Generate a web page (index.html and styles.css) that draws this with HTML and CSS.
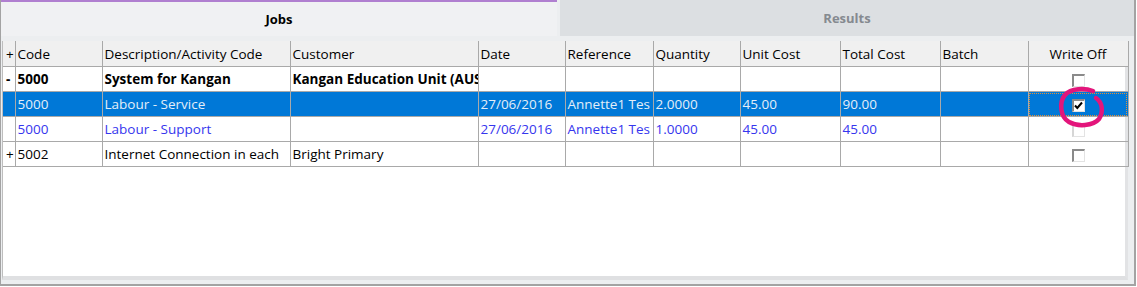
FILE: index.html
```html
<!DOCTYPE html>
<html lang="en">
<head>
  <meta charset="UTF-8" />
  <title>Jobs</title>
  <link rel="stylesheet" href="styles.css">
</head>
<body>
  <div class="window">
    <div class="tabs">
      <div class="tab active">Jobs</div>
      <div class="tab">Results</div>
    </div>

    <div class="panel">
      <table class="grid">
        <colgroup>
          <col style="width:12px"><col style="width:87px"><col style="width:188px"><col style="width:188px">
          <col style="width:87px"><col style="width:88px"><col style="width:87px"><col style="width:100px">
          <col style="width:100px"><col style="width:88px"><col style="width:100px">
        </colgroup>
        <thead>
          <tr>
            <th class="exp">+</th>
            <th>Code</th>
            <th>Description/Activity Code</th>
            <th>Customer</th>
            <th>Date</th>
            <th>Reference</th>
            <th>Quantity</th>
            <th>Unit Cost</th>
            <th>Total Cost</th>
            <th>Batch</th>
            <th class="center">Write Off</th>
          </tr>
        </thead>
        <tbody>
          <tr class="parent">
            <td class="exp">-</td>
            <td>5000</td>
            <td>System for Kangan</td>
            <td>Kangan Education Unit (AUS</td>
            <td></td><td></td><td></td><td></td><td></td><td></td>
            <td class="center"><span class="check"></span></td>
          </tr>
          <tr class="selected">
            <td class="exp"></td>
            <td>5000</td>
            <td>Labour - Service</td>
            <td></td>
            <td>27/06/2016</td>
            <td>Annette1 Tes</td>
            <td>2.0000</td>
            <td>45.00</td>
            <td>90.00</td>
            <td></td>
            <td class="center focus">
              <span class="check on">
                <svg width="11" height="11" viewBox="0 0 11 11"><path d="M2 5.5 L4.3 8 L9 2.5" fill="none" stroke="#000" stroke-width="2"/></svg>
              </span>
              <svg class="ring" width="50" height="46" viewBox="0 0 50 46">
                <path d="M37 6 C29 3 15 3 9 10 C3 17 4 32 13 37 C22 42 37 41 43 34 C48 26 46 17 40 13" fill="none" stroke="#e3157b" stroke-width="4.5" stroke-linecap="round"/>
              </svg>
            </td>
          </tr>
          <tr class="child">
            <td class="exp"></td>
            <td>5000</td>
            <td>Labour - Support</td>
            <td></td>
            <td>27/06/2016</td>
            <td>Annette1 Tes</td>
            <td>1.0000</td>
            <td>45.00</td>
            <td>45.00</td>
            <td></td>
            <td class="center"><span class="check faint"></span></td>
          </tr>
          <tr>
            <td class="exp">+</td>
            <td>5002</td>
            <td>Internet Connection in each</td>
            <td>Bright Primary</td>
            <td></td><td></td><td></td><td></td><td></td><td></td>
            <td class="center"><span class="check"></span></td>
          </tr>
        </tbody>
      </table>
    </div>
  </div>
</body>
</html>
```

FILE: styles.css
```css
body {
  margin: 0;
  background-color: #ffffff;
  font-family: "Open Sans", "Noto Sans", Arial, sans-serif;
  font-size: 13.5px;
  color: #000;
}

.window {
  width: 1133px;
  height: 284px;
  background-color: #eceef0;
  border-left: 1px solid #a3a3a3;
  border-right: 2px solid #a3a3a3;
  border-bottom: 2px solid #a3a3a3;
}

.tabs {
  display: flex;
  gap: 3px;
  height: 36px;
}

.tab {
  flex: 1;
  display: flex;
  align-items: center;
  justify-content: center;
  background-color: #dcdfe2;
  color: #858a90;
  font-size: 13px;
  font-weight: bold;
}

.tab.active {
  flex: 0 0 556px;
  background-color: #f0f1f3;
  color: #000;
  border-top: 2px solid #b07fd0;
  box-sizing: border-box;
}

.panel {
  margin: 5px 6px 0 1px;
  height: 239px;
  background-color: #ffffff;
  border-left: 1px solid #bdbdbd;
  border-right: 3px solid #e2e3e5;
  border-bottom: 4px solid #dfe0e2;
  box-sizing: border-box;
}

.grid {
  table-layout: fixed;
  border-collapse: collapse;
  width: 1125px;
}

.grid th,
.grid td {
  height: 24px;
  padding: 0 2px;
  border: 1px solid #a9a9a9;
  white-space: nowrap;
  overflow: hidden;
  text-overflow: clip;
  text-align: left;
  font-weight: normal;
  position: relative;
}

.grid tr > :first-child {
  border-left: none;
}

.grid th {
  height: 25px;
  background-color: #f0f0f0;
  border-top: none;
}

.grid .exp {
  padding: 0 0 0 3px;
}

.grid .center {
  text-align: center;
}

.parent td {
  font-weight: bold;
}

.selected td {
  background-color: #0078d7;
  color: #e4eef8;
  overflow: visible;
}

.child td {
  color: #3636ee;
}

.focus {
  outline: 1px dotted #e0913a;
  outline-offset: -2px;
}

.check {
  display: inline-block;
  width: 13px;
  height: 13px;
  box-sizing: border-box;
  vertical-align: middle;
  background-color: #fff;
  border-top: 2px solid #8a8a8a;
  border-left: 2px solid #8a8a8a;
  border-right: 1px solid #e3e3e3;
  border-bottom: 1px solid #e3e3e3;
}

.check.on svg {
  display: block;
  margin: -1px 0 0 -1px;
}

.check.faint {
  border-top-color: #d6d6d6;
  border-left-color: #d6d6d6;
}

.ring {
  position: absolute;
  left: 27px;
  top: -7px;
  z-index: 2;
}
```
